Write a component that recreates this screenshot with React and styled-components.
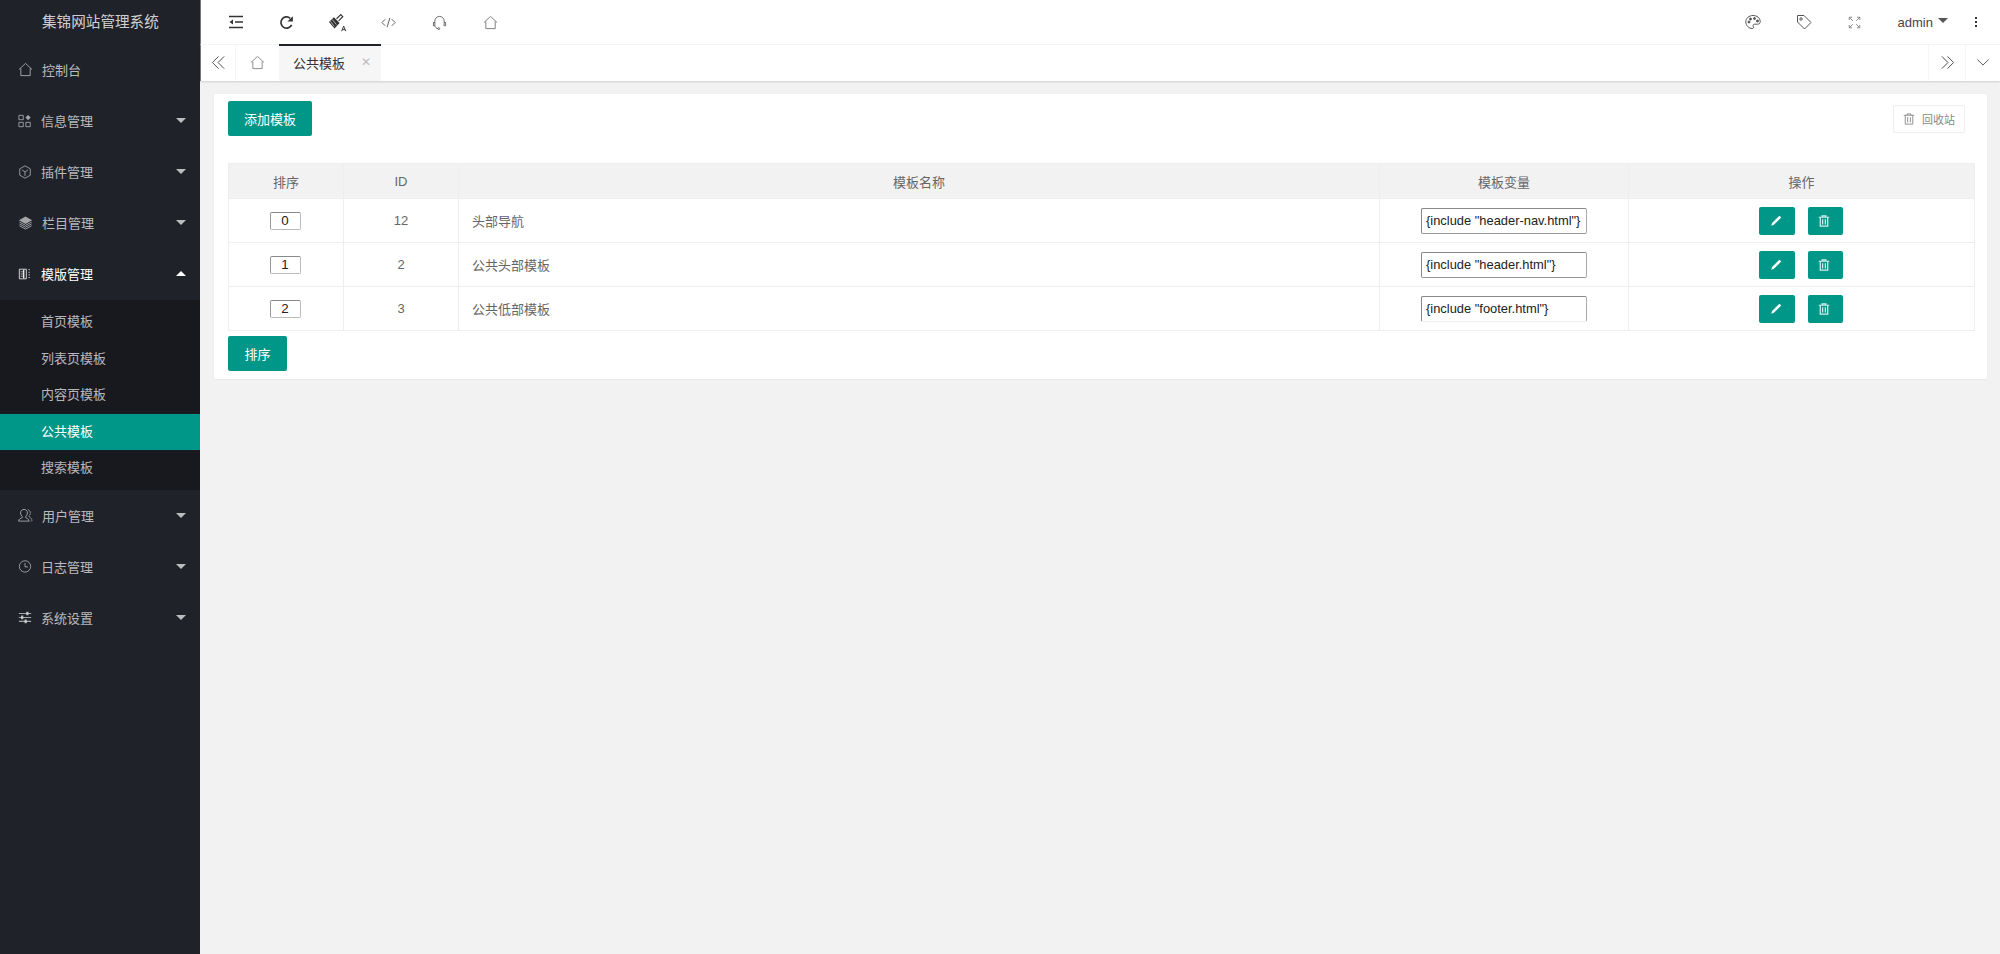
import React from "react";
import styled, { createGlobalStyle } from "styled-components";

const GlobalStyle = createGlobalStyle`
  html, body {
    margin: 0;
    padding: 0;
    height: 100%;
    background: #f2f2f2;
    font-family: "Liberation Sans", "Noto Sans CJK SC", sans-serif;
    font-size: 13px;
    color: #666;
  }
  * {
    box-sizing: border-box;
  }
`;

const Layout = styled.div`
  display: flex;
  width: 2000px;
  height: 954px;
  overflow: hidden;
`;

const Sidebar = styled.aside`
  width: 200px;
  flex-shrink: 0;
  background: #20222a;
  display: flex;
  flex-direction: column;
`;

const Logo = styled.div`
  height: 44px;
  line-height: 44px;
  font-size: 14.6px;
  color: rgba(255, 255, 255, 0.8);
  padding-left: 42px;
`;

const NavItem = styled.div`
  height: 51px;
  display: flex;
  align-items: center;
  padding: 0 14px 0 18px;
  color: ${(p) => (p.$open ? "#fff" : "rgba(255, 255, 255, 0.7)")};
  font-size: 13px;
  span {
    margin-left: 9px;
    flex: 1;
  }
  svg {
    flex-shrink: 0;
    opacity: ${(p) => (p.$open ? 0.9 : 0.85)};
  }
`;

const Caret = styled.i`
  width: 0;
  height: 0;
  border-left: 5px solid transparent;
  border-right: 5px solid transparent;
  border-top: ${(p) => (p.$up ? "0" : "5px solid rgba(255,255,255,.7)")};
  border-bottom: ${(p) => (p.$up ? "5px solid #fff" : "0")};
`;

const SubMenu = styled.div`
  margin-top: 1px;
  background: #18191f;
  padding: 4px 0 3px;
`;

const SubItem = styled.div`
  height: 36.5px;
  line-height: 36.5px;
  padding-left: 41px;
  font-size: 13px;
  color: ${(p) => (p.$active ? "#fff" : "rgba(255, 255, 255, 0.7)")};
  background: ${(p) => (p.$active ? "#009688" : "transparent")};
`;

const Main = styled.main`
  flex: 1;
  min-width: 0;
  display: flex;
  flex-direction: column;
`;

const TopBar = styled.header`
  height: 45px;
  background: #fff;
  display: flex;
  align-items: center;
  justify-content: space-between;
  border-left: 1px solid #777;
  border-bottom: 1px solid #f6f6f6;
  color: #333;
`;

const ToolGroup = styled.div`
  display: flex;
  align-items: center;
  padding-left: ${(p) => p.$pad || 0}px;
`;

const Tool = styled.div`
  width: 51px;
  height: 44px;
  display: flex;
  align-items: center;
  justify-content: center;
  color: ${(p) => p.$color || "#333"};
`;

const UserName = styled.div`
  width: 70px;
  display: flex;
  align-items: center;
  justify-content: flex-end;
  gap: 5px;
  font-size: 13px;
  color: #444;
  padding-right: 2px;
  i {
    width: 0;
    height: 0;
    margin-bottom: 3px;
    border-left: 5px solid transparent;
    border-right: 5px solid transparent;
    border-top: 5px solid #555;
  }
`;

const MoreDots = styled.div`
  width: 50px;
  display: flex;
  flex-direction: column;
  align-items: center;
  gap: 2px;
  padding-left: 3px;
  padding-right: 1px;
  b {
    width: 2px;
    height: 2px;
    background: #333;
  }
`;

const TabBar = styled.div`
  height: 36px;
  background: #fff;
  display: flex;
  align-items: stretch;
  border-left: 1px solid #777;
  box-shadow: 0 1px 2px rgba(0, 0, 0, 0.15);
`;

const TabIcon = styled.div`
  width: ${(p) => p.$w}px;
  display: flex;
  align-items: center;
  justify-content: center;
  padding-bottom: 2px;
  color: ${(p) => p.$color || "#444"};
  border-right: ${(p) => (p.$line ? "1px solid #f6f6f6" : "0")};
  border-left: ${(p) => (p.$lineLeft ? "1px solid #f6f6f6" : "0")};
`;

const ActiveTab = styled.div`
  width: 102px;
  margin-top: -1px;
  background: #f6f6f6;
  border-top: 2px solid #20222a;
  display: flex;
  align-items: center;
  padding: 0 0 3px 14px;
  font-size: 13px;
  color: #333;
  em {
    font-style: normal;
    margin-left: 16px;
    color: #bbb;
    font-size: 12px;
  }
`;

const TabSpacer = styled.div`
  flex: 1;
`;

const Content = styled.div`
  padding: 13px 13px 0 14px;
`;

const Card = styled.section`
  background: #fff;
  border-radius: 2px;
  box-shadow: 0 1px 2px rgba(0, 0, 0, 0.05);
  padding: 7px 13px 8px 14px;
  height: 285px;
`;

const CardTop = styled.div`
  display: flex;
  justify-content: space-between;
  align-items: flex-start;
  padding-right: 9px;
  height: 62px;
`;

const PrimaryButton = styled.button`
  display: block;
  width: ${(p) => p.$w}px;
  height: 35px;
  padding: 0;
  border: 0;
  border-radius: 2px;
  background: #009688;
  color: #fff;
  font: inherit;
  font-size: 13px;
`;

const RecycleButton = styled.button`
  width: 72px;
  height: 28px;
  margin-top: 4px;
  display: flex;
  align-items: center;
  justify-content: center;
  gap: 7px;
  padding: 0;
  border: 1px solid #eee;
  border-radius: 2px;
  background: #fff;
  color: #888;
  font: inherit;
  font-size: 11px;
`;

const Table = styled.table`
  width: 1746px;
  table-layout: fixed;
  border-collapse: collapse;
  margin-bottom: 5px;
  th {
    height: 35px;
    background: #f2f2f2;
    font-weight: 400;
    font-size: 13px;
    color: #666;
    border: 1px solid #eee;
  }
  td {
    height: 44px;
    padding: 0;
    font-size: 13px;
    color: #666;
    text-align: center;
    border: 1px solid #eee;
  }
  td.name {
    text-align: left;
    padding-left: 13px;
  }
`;

const OrderInput = styled.input`
  display: block;
  width: 31px;
  height: 18px;
  margin: 0 auto;
  padding: 0;
  text-align: center;
  font: inherit;
  font-size: 13.3px;
  color: #222;
  outline: 0;
  border-width: 1px;
  border-style: solid;
  border-color: #888 #bbb #bbb #999;
  border-radius: 2px;
  transform: translateX(-1px);
`;

const VarInput = styled.input`
  display: block;
  width: 166px;
  height: 26px;
  margin: 0 auto;
  padding: 0 4px;
  font: inherit;
  font-size: 12.9px;
  color: #222;
  outline: 0;
  border-width: 1px;
  border-style: solid;
  border-color: #888 #aaa ${(p) => (p.$clipped ? "#eee" : "#999")} #888;
  border-radius: 2px;
`;

const Actions = styled.div`
  display: flex;
  justify-content: center;
  gap: 13px;
  padding-right: 2px;
`;

const IconButton = styled.button`
  width: ${(p) => p.$w}px;
  height: 28px;
  padding: 0 ${(p) => p.$shift || 0}px 0 0;
  border: 0;
  border-radius: 2px;
  background: #009688;
  color: ${(p) => p.$color || "#fff"};
  display: flex;
  align-items: center;
  justify-content: center;
`;

const Svg = ({ size = 16, fill = "none", stroke = "currentColor", sw = 1, children }) => (
  <svg width={size} height={size} viewBox="0 0 16 16" fill={fill} stroke={stroke} strokeWidth={sw}>
    {children}
  </svg>
);

const HomeIcon = ({ size = 15 }) => (
  <Svg size={size}>
    <path d="M1 8 8 1.500 15 8M3 6.800V14.500H13V6.800" />
  </Svg>
);
const AppsIcon = () => (
  <Svg size={14}>
    <path d="M1 1.500h5v5H1zM1 9.500h5v5H1zM9 9.500h5v5H9z" />
    <path d="M11.500 1 14.500 4 11.500 7 8.500 4z" fill="currentColor" stroke="none" />
  </Svg>
);
const CubeIcon = () => (
  <Svg size={14}>
    <path d="M8 1 14 4.300V11.700L8 15 2 11.700V4.300zM4.500 5.500 8 8l3.500-2.500M8 8v4.500" />
  </Svg>
);
const LayersIcon = () => (
  <Svg size={15}>
    <path d="M8 1.500 15 5.500 8 9.500 1 5.500z" fill="currentColor" stroke="none" />
    <path d="M1.500 7.500 8 11 14.500 7.500M1.500 9.500 8 13 14.500 9.500M1.500 11.500 8 15 14.500 11.500" />
  </Svg>
);
const TemplateIcon = () => (
  <Svg size={14}>
    <path d="M1.500 2.500h8v11h-8z" />
    <path d="M6.500 3v10" strokeWidth="1.600" />
    <path d="M3 5.500h3M3 8h3M3 10.500h3" strokeWidth=".8" />
    <path d="M12 3h2.500M12 6h2.500M12 9h2.500M12 12h2.500" strokeDasharray="1.500 1" />
  </Svg>
);
const UserIcon = () => (
  <Svg size={15}>
    <path d="M6.500 1.500c2 0 3.500 1.500 3.500 3.800 0 1.700-.8 3-1.800 3.700v1.200l2.300 1.300c.9.500 1.300 1.400 1.300 2.500H.7c0-1.100.4-2 1.300-2.500l2.500-1.300V9C3.500 8.300 2.700 7 2.700 5.300c0-2.300 1.800-3.800 3.800-3.800z" />
    <path d="M10.500 1.800c1.900.6 3 2.100 2.600 4.100-.2 1-.7 1.800-1.400 2.400l.3 1.200 1.400.9c.9.600 1.400 1.500 1.400 2.600 0 .8-.5 1.400-1.300 1.500" strokeDasharray="2 .6" />
  </Svg>
);
const ClockIcon = () => (
  <Svg size={14}>
    <circle cx="8" cy="8.500" r="6.500" />
    <path d="M8 4.500v4.500h3.500" />
  </Svg>
);
const SlidersIcon = () => (
  <Svg size={14} sw={1.200}>
    <path d="M1 4h14M1 8.500h14M1 13h14" />
    <path d="M10 2.500h1.500v3H10zM4 7h1.500v3H4zM8 11.500h1.500v3H8z" fill="currentColor" />
  </Svg>
);
const ShrinkIcon = () => (
  <Svg size={16} sw={1.500}>
    <path d="M1 2.500h14M7 8h8M1 13.500h14" />
    <path d="M5 5.500 1.500 8 5 10.500z" fill="currentColor" stroke="none" />
  </Svg>
);
const RefreshIcon = () => (
  <Svg size={15} sw={1.800}>
    <path d="M13.500 10.500A6 6 0 1 1 12 3.500" />
    <path d="M14.800 1.200V7H9z" fill="currentColor" stroke="none" />
  </Svg>
);
const BrushIcon = () => (
  <svg width="19" height="19" viewBox="0 0 16 16" fill="none" stroke="currentColor">
    <path d="M0.800 7.500 5 3.500l4.800 5-4.300 4.500z" fill="currentColor" stroke="none" />
    <path d="M2 7l3.300 4.300M3.600 5.500l3.500 4.300" stroke="#fff" strokeWidth=".5" />
    <path d="M7.200 4.800 10.800 1.400l1.600 1.700-3.500 3.500" strokeWidth="1" />
    <path d="M11.500 15.300 13.200 11l1.700 4.300M12 14h2.400" strokeWidth=".8" />
  </svg>
);
const CodeIcon = () => (
  <Svg size={15}>
    <path d="M4.500 4.500 1 8l3.500 3.500M11.500 4.500 15 8l-3.500 3.500M9.500 3 6.500 13" />
  </Svg>
);
const HeadsetIcon = () => (
  <Svg size={15} sw={0.900}>
    <path d="M3 8V6.500a5 5 0 0 1 10 0V8" />
    <path d="M1.500 8h1.600v3.500H1.500zM12.900 8h1.600v3.500h-1.600z" />
    <path d="M3 11.500c.4 1.500 1.500 2.800 3.500 3" />
    <circle cx="7.200" cy="14.500" r="1" />
  </Svg>
);
const PaletteIcon = () => (
  <Svg size={16}>
    <path d="M8 1.500c-4 0-7.200 2.800-7.200 6.300 0 3.800 3.200 6.700 6.400 6.700 1.800 0 1.500-1.500 1-2.300-.5-1 .2-2 1.300-2h3c1.500 0 2.700-.7 2.700-2.600C15.200 4 12 1.500 8 1.500z" />
    <circle cx="4" cy="8" r="1" fill="currentColor" />
    <circle cx="5.500" cy="5" r="1" fill="currentColor" />
    <circle cx="9.500" cy="4.500" r="1" fill="currentColor" />
    <circle cx="12.500" cy="7" r="1" fill="currentColor" />
  </Svg>
);
const TagIcon = () => (
  <Svg size={16}>
    <path d="M1.500 1.500H8L15 8.500 8.500 15 1.500 8z" />
    <circle cx="5" cy="5" r="1.200" />
  </Svg>
);
const ExpandIcon = () => (
  <Svg size={13}>
    <path d="M6 6 1.500 1.500M1.500 5V1.500H5M10 6l4.500-4.500M11 1.500h3.500V5M6 10l-4.500 4.500M1.500 11v3.500H5M10 10l4.500 4.500M14.500 11v3.500H11" />
  </Svg>
);
const DoubleLeftIcon = () => (
  <Svg size={15}>
    <path d="M8 1.500 1.500 8 8 14.500M14 1.500 7.500 8l6.500 6.500" />
  </Svg>
);
const DoubleRightIcon = () => (
  <Svg size={15}>
    <path d="M2 1.500 8.500 8 2 14.500M8 1.500 14.500 8 8 14.500" />
  </Svg>
);
const ChevronIcon = () => (
  <Svg size={14}>
    <path d="M1.500 5 8 11.500 14.500 5" />
  </Svg>
);
const TrashIcon = ({ size = 12, sw = 1.200 }) => (
  <Svg size={size} sw={sw}>
    <path d="M1 3h14M5.500 3V1.200h5V3" />
    <path d="M3 3v11.800h10V3" />
    <path d="M6.200 5.500v7M9.800 5.500v7" />
  </Svg>
);
const PencilIcon = () => (
  <Svg size={13} fill="currentColor" stroke="none">
    <path d="M1.500 14.500 2.500 11 11.500 2 13.800 4.200 4.800 13.300z" />
  </Svg>
);

const navTop = [
  { label: "控制台", icon: <HomeIcon />, plain: true },
  { label: "信息管理", icon: <AppsIcon /> },
  { label: "插件管理", icon: <CubeIcon /> },
  { label: "栏目管理", icon: <LayersIcon /> },
];
const subItems = ["首页模板", "列表页模板", "内容页模板", "公共模板", "搜索模板"];
const navBottom = [
  { label: "用户管理", icon: <UserIcon /> },
  { label: "日志管理", icon: <ClockIcon /> },
  { label: "系统设置", icon: <SlidersIcon /> },
];
const rows = [
  { order: 0, id: 12, name: "头部导航", tag: '{include "header-nav.html"}' },
  { order: 1, id: 2, name: "公共头部模板", tag: '{include "header.html"}' },
  { order: 2, id: 3, name: "公共低部模板", tag: '{include "footer.html"}', clipped: true },
];

const App = () => (
  <Layout>
    <GlobalStyle />
    <Sidebar>
      <Logo>集锦网站管理系统</Logo>
      {navTop.map((item) => (
        <NavItem key={item.label}>
          {item.icon}
          <span>{item.label}</span>
          {!item.plain && <Caret />}
        </NavItem>
      ))}
      <NavItem $open>
        <TemplateIcon />
        <span>模版管理</span>
        <Caret $up />
      </NavItem>
      <SubMenu>
        {subItems.map((label) => (
          <SubItem key={label} $active={label === "公共模板"}>
            {label}
          </SubItem>
        ))}
      </SubMenu>
      {navBottom.map((item) => (
        <NavItem key={item.label}>
          {item.icon}
          <span>{item.label}</span>
          <Caret />
        </NavItem>
      ))}
    </Sidebar>
    <Main>
      <TopBar>
        <ToolGroup $pad={9}>
          <Tool><ShrinkIcon /></Tool>
          <Tool><RefreshIcon /></Tool>
          <Tool><BrushIcon /></Tool>
          <Tool $color="#555"><CodeIcon /></Tool>
          <Tool $color="#555"><HeadsetIcon /></Tool>
          <Tool $color="#777"><HomeIcon /></Tool>
        </ToolGroup>
        <ToolGroup>
          <Tool $color="#555"><PaletteIcon /></Tool>
          <Tool $color="#555"><TagIcon /></Tool>
          <Tool $color="#777"><ExpandIcon /></Tool>
          <UserName>admin<i /></UserName>
          <MoreDots><b /><b /><b /></MoreDots>
        </ToolGroup>
      </TopBar>
      <TabBar>
        <TabIcon $w={35} $line><DoubleLeftIcon /></TabIcon>
        <TabIcon $w={43} $color="#888"><HomeIcon /></TabIcon>
        <ActiveTab>公共模板<em>✕</em></ActiveTab>
        <TabSpacer />
        <TabIcon $w={37} $lineLeft><DoubleRightIcon /></TabIcon>
        <TabIcon $w={35} $lineLeft><ChevronIcon /></TabIcon>
      </TabBar>
      <Content>
        <Card>
          <CardTop>
            <PrimaryButton $w={84}>添加模板</PrimaryButton>
            <RecycleButton><TrashIcon />回收站</RecycleButton>
          </CardTop>
          <Table>
            <colgroup>
              <col width="115" />
              <col width="115" />
              <col width="921" />
              <col width="249" />
              <col width="346" />
            </colgroup>
            <thead>
              <tr>
                <th>排序</th>
                <th>ID</th>
                <th>模板名称</th>
                <th>模板变量</th>
                <th>操作</th>
              </tr>
            </thead>
            <tbody>
              {rows.map((row) => (
                <tr key={row.id}>
                  <td><OrderInput defaultValue={row.order} /></td>
                  <td>{row.id}</td>
                  <td className="name">{row.name}</td>
                  <td><VarInput defaultValue={row.tag} $clipped={row.clipped} /></td>
                  <td>
                    <Actions>
                      <IconButton $w={36}><PencilIcon /></IconButton>
                      <IconButton $w={35} $color="#d5f0ec" $shift={2}><TrashIcon sw={1.600} /></IconButton>
                    </Actions>
                  </td>
                </tr>
              ))}
            </tbody>
          </Table>
          <PrimaryButton $w={59}>排序</PrimaryButton>
        </Card>
      </Content>
    </Main>
  </Layout>
);

export default App;
